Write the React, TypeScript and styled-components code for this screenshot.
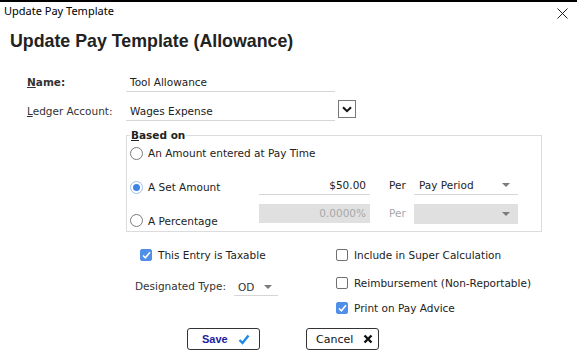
import React from "react";
import styled, { createGlobalStyle } from "styled-components";

const GlobalStyle = createGlobalStyle`
  html, body {
    margin: 0;
    padding: 0;
    background: #fff;
  }
  body {
    font-family: "DejaVu Sans", Verdana, sans-serif;
    font-size: 10.5px;
    color: #222;
  }
`;

const Window = styled.div`
  width: 577px;
  height: 362px;
  box-sizing: border-box;
  border-top: 2px solid #000;
  overflow: hidden;
`;

const TitleBar = styled.div`
  height: 17px;
  display: flex;
  align-items: center;
  justify-content: space-between;
  padding: 0 9px 0 4px;
  font-family: "Noto Sans", "Open Sans", sans-serif;
  font-size: 11px;
  color: #000;
`;

const CloseIcon = styled.svg`
  width: 11px;
  height: 11px;
  margin-top: 5px;
`;

const Heading = styled.h1`
  margin: 11px 0 0 10px;
  height: 22px;
  line-height: 22px;
  font-family: "Liberation Sans", Arial, sans-serif;
  font-size: 17.8px;
  font-weight: bold;
  color: #222;
`;

const FormRow = styled.div<{ $top: number }>`
  display: flex;
  align-items: center;
  height: 24px;
  margin-top: ${(p) => p.$top}px;
  padding-left: 27px;
`;

const FieldLabel = styled.label<{ $bold?: boolean }>`
  width: 99px;
  font-weight: ${(p) => (p.$bold ? "bold" : "normal")};
  color: #333;
  u {
    text-decoration: underline;
  }
`;

const TextField = styled.div<{ $width: number; $align?: string; $disabled?: boolean }>`
  box-sizing: border-box;
  width: ${(p) => p.$width}px;
  height: 19px;
  line-height: 18px;
  padding: 0 4px;
  text-align: ${(p) => p.$align || "left"};
  border-bottom: 1px solid ${(p) => (p.$disabled ? "#e0e0e0" : "#d6d6d6")};
  background: ${(p) => (p.$disabled ? "#e0e0e0" : "transparent")};
  color: ${(p) => (p.$disabled ? "#a8a8a8" : "#222")};
`;

const DropButton = styled.div`
  box-sizing: border-box;
  width: 18px;
  height: 18px;
  margin-left: 3px;
  margin-top: -4px;
  border: 1px solid #777;
  display: flex;
  align-items: center;
  justify-content: center;
`;

const Fieldset = styled.fieldset`
  margin: 6px 0 0 126px;
  width: 416px;
  box-sizing: border-box;
  padding: 0 0 0 3px;
  border: 1px solid #dcdcdc;
  min-width: 0;
`;

const Legend = styled.legend`
  padding: 0 1px;
  font-weight: bold;
  line-height: 13px;
  color: #222;
`;

const OptionRow = styled.div<{ $top: number; $height: number }>`
  display: grid;
  grid-template-columns: 129px 111px 44px 104px;
  height: ${(p) => p.$height}px;
  margin-top: ${(p) => p.$top}px;
  margin-left: -4px;
  padding-left: 4px;
`;

const RadioLabel = styled.div<{ $bottom?: boolean; $span?: boolean }>`
  display: flex;
  align-items: center;
  gap: 5px;
  white-space: nowrap;
  grid-column: ${(p) => (p.$span ? "1 / 4" : "auto")};
  align-self: ${(p) => (p.$bottom ? "end" : "center")};
  margin-bottom: ${(p) => (p.$bottom ? "4px" : "0")};
  color: #222;
`;

const Radio = styled.span<{ $checked?: boolean }>`
  box-sizing: border-box;
  width: 13px;
  height: 13px;
  border-radius: 50%;
  border: 1px solid ${(p) => (p.$checked ? "#9cc0f0" : "#7a7a7a")};
  display: flex;
  align-items: center;
  justify-content: center;
  &::after {
    content: "";
    display: ${(p) => (p.$checked ? "block" : "none")};
    width: 7px;
    height: 7px;
    border-radius: 50%;
    background: #3d84e6;
  }
`;

const PerLabel = styled.div<{ $disabled?: boolean }>`
  align-self: start;
  line-height: 19px;
  padding-left: 19px;
  color: ${(p) => (p.$disabled ? "#a8a8a8" : "#222")};
`;

const Select = styled.div<{ $disabled?: boolean }>`
  box-sizing: border-box;
  height: ${(p) => (p.$disabled ? 20 : 19)}px;
  display: flex;
  align-items: center;
  padding: 0 8px 0 5px;
  border-bottom: 1px solid ${(p) => (p.$disabled ? "#e0e0e0" : "#d6d6d6")};
  background: ${(p) => (p.$disabled ? "#e0e0e0" : "transparent")};
  &::after {
    content: "";
    margin-left: auto;
    border-left: 4px solid transparent;
    border-right: 4px solid transparent;
    border-top: 4px solid #7b7b7b;
  }
`;

const Options = styled.div`
  display: grid;
  grid-template-columns: 196px 1fr;
  margin: 13px 0 0 135px;
`;

const Column = styled.div`
  display: flex;
  flex-direction: column;
  padding-left: 5px;
`;

const CheckRow = styled.div<{ $top: number }>`
  display: flex;
  align-items: center;
  gap: 6px;
  height: 20px;
  margin-top: ${(p) => p.$top}px;
  color: #222;
`;

const Checkbox = styled.span<{ $checked?: boolean }>`
  box-sizing: border-box;
  width: 12px;
  height: 12px;
  border-radius: 2px;
  border: 1px solid ${(p) => (p.$checked ? "#4f8fe8" : "#707070")};
  background: ${(p) => (p.$checked ? "#4f8fe8" : "#fff")};
  display: flex;
  align-items: center;
  justify-content: center;
`;

const TypeRow = styled.div`
  display: flex;
  align-items: center;
  height: 20px;
  margin: 11px 0 0 -5px;
  color: #333;
`;

const TypeSelect = styled.div`
  box-sizing: border-box;
  width: 44px;
  height: 18px;
  margin-left: 8px;
  margin-top: 2px;
  display: flex;
  align-items: center;
  justify-content: space-between;
  padding: 0 6px 0 4px;
  border-bottom: 1px solid #d6d6d6;
  &::after {
    content: "";
    border-left: 4px solid transparent;
    border-right: 4px solid transparent;
    border-top: 4px solid #7b7b7b;
  }
`;

const Buttons = styled.div`
  display: flex;
  gap: 46px;
  margin: 10px 0 0 187px;
`;

const Button = styled.div<{ $primary?: boolean }>`
  box-sizing: border-box;
  width: 73px;
  height: 22px;
  border: 1px solid #333;
  border-radius: 3px;
  display: flex;
  align-items: center;
  justify-content: space-between;
  padding: ${(p) => (p.$primary ? "0 9px 0 14px" : "0 5px 0 9px")};
  font-family: ${(p) => (p.$primary ? '"Liberation Sans", Arial, sans-serif' : "inherit")};
  font-weight: ${(p) => (p.$primary ? "bold" : "normal")};
  font-size: 11px;
  color: ${(p) => (p.$primary ? "#1d1d9e" : "#111")};
`;

const Tick = () => (
  <svg width="9" height="8" viewBox="0 0 9 8">
    <path d="M1 4.5 L3.4 6.8 L8 1.2" fill="none" stroke="#fff" strokeWidth="1.6" />
  </svg>
);

export default function App() {
  return (
    <>
      <GlobalStyle />
      <Window>
        <TitleBar>
          <span>Update Pay Template</span>
          <CloseIcon viewBox="0 0 11 11">
            <path d="M0.5 0.5 L10.5 10.5 M10.5 0.5 L0.5 10.5" stroke="#222" strokeWidth="1" />
          </CloseIcon>
        </TitleBar>
        <Heading>Update Pay Template (Allowance)</Heading>

        <FormRow $top={18}>
          <FieldLabel $bold>
            <u>N</u>ame:
          </FieldLabel>
          <TextField $width={209}>Tool Allowance</TextField>
        </FormRow>
        <FormRow $top={5}>
          <FieldLabel>
            <u>L</u>edger Account:
          </FieldLabel>
          <TextField $width={209}>Wages Expense</TextField>
          <DropButton>
            <svg width="10" height="7" viewBox="0 0 10 7">
              <path d="M1 1.2 L5 5.2 L9 1.2" fill="none" stroke="#111" strokeWidth="2" />
            </svg>
          </DropButton>
        </FormRow>

        <Fieldset>
          <Legend>
            <u>B</u>ased on
          </Legend>
          <OptionRow $top={0} $height={22}>
            <RadioLabel $span>
              <Radio />
              An Amount entered at Pay Time
            </RadioLabel>
          </OptionRow>
          <OptionRow $top={12} $height={22}>
            <RadioLabel>
              <Radio $checked />
              A Set Amount
            </RadioLabel>
            <TextField $width={111} $align="right">
              $50.00
            </TextField>
            <PerLabel>Per</PerLabel>
            <Select>Pay Period</Select>
          </OptionRow>
          <OptionRow $top={6} $height={27}>
            <RadioLabel $bottom>
              <Radio />
              A Percentage
            </RadioLabel>
            <TextField $width={111} $align="right" $disabled>
              0.0000%
            </TextField>
            <PerLabel $disabled>Per</PerLabel>
            <Select $disabled />
          </OptionRow>
        </Fieldset>

        <Options>
          <Column>
            <CheckRow $top={0}>
              <Checkbox $checked>
                <Tick />
              </Checkbox>
              This Entry is Taxable
            </CheckRow>
            <TypeRow>
              Designated Type:
              <TypeSelect>OD</TypeSelect>
            </TypeRow>
          </Column>
          <Column>
            <CheckRow $top={0}>
              <Checkbox />
              Include in Super Calculation
            </CheckRow>
            <CheckRow $top={8}>
              <Checkbox />
              Reimbursement (Non-Reportable)
            </CheckRow>
            <CheckRow $top={5}>
              <Checkbox $checked>
                <Tick />
              </Checkbox>
              Print on Pay Advice
            </CheckRow>
          </Column>
        </Options>

        <Buttons>
          <Button $primary>
            Save
            <svg width="12" height="11" viewBox="0 0 12 11">
              <path d="M1.5 6 L4.5 9 L10.5 1.5" fill="none" stroke="#1e8ae6" strokeWidth="2.4" />
            </svg>
          </Button>
          <Button>
            Cancel
            <svg width="10" height="10" viewBox="0 0 10 10">
              <path d="M1.5 1.5 L8.5 8.5 M8.5 1.5 L1.5 8.5" stroke="#111" strokeWidth="2.4" />
            </svg>
          </Button>
        </Buttons>
      </Window>
    </>
  );
}
